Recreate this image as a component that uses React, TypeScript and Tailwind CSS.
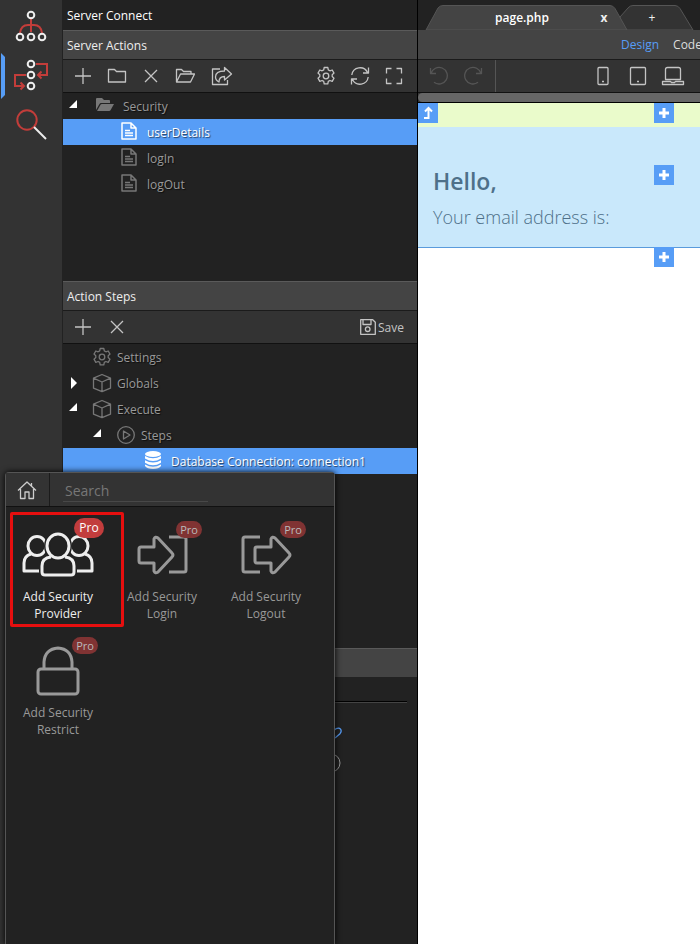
import type { ReactNode } from "react";

type IconProps = { children: ReactNode; w?: number; h?: number; sw?: number; className?: string };

function Icon({ children, w = 20, h = 20, sw = 1.3, className = "" }: IconProps) {
  return (
    <svg
      width={w}
      height={h}
      viewBox={`0 0 ${w} ${h}`}
      fill="none"
      stroke="currentColor"
      strokeWidth={sw}
      strokeLinejoin="round"
      className={`block shrink-0 ${className}`}
      aria-hidden="true"
    >
      {children}
    </svg>
  );
}

const gearPath =
  "M8.2 1.5h3.6l.5 2.4 1.6.9 2.3-.8 1.8 3.1-1.8 1.6v1.9l1.8 1.6-1.8 3.1-2.3-.8-1.6.9-.5 2.4H8.2l-.5-2.4-1.6-.9-2.3.8L2 12.200l1.800-1.600V8.700L2 7.100 3.800 4l2.300.8 1.600-.9z";

const Gear = () => (
  <Icon>
    <path d={gearPath} />
    <circle cx="10" cy="10" r="2.8" />
  </Icon>
);
const Plus = () => (
  <Icon>
    <path d="M10 2v16M2 10h16" />
  </Icon>
);
const Cross = () => (
  <Icon>
    <path d="M4 4l12 12M16 4L4 16" />
  </Icon>
);
const Folder = () => (
  <Icon>
    <path d="M1.500 16V3.500h6l2 2h9V16z" />
  </Icon>
);
const FolderOpen = () => (
  <Icon>
    <path d="M1.500 16V3.500h5l2 2h7.500V8M1.500 16l4-8H19.500l-4 8z" />
  </Icon>
);
const Share = () => (
  <Icon w={22}>
    <path d="M9 3H1.500v15.500h15V14" />
    <path d="M13.500 1.500L20.500 8l-7 6v-3.500c-4 0-5.500 1.500-5.500 5.500-2-1-3.500-3-3.500-5C4.500 7 8.500 5 13.500 5z" />
  </Icon>
);
const Refresh = () => (
  <Icon>
    <path d="M1.800 9A8.300 8.300 0 0 1 17.500 6.500M18.200 11A8.300 8.300 0 0 1 2.500 13.500M18.500 1.500v5.500h-5.500M1.500 18.500V13H7" />
  </Icon>
);
const Expand = () => (
  <Icon>
    <path d="M2.500 7.500v-5h5M12.500 2.500h5v5M17.500 12.500v5h-5M7.500 17.500h-5v-5" />
  </Icon>
);
const Save = () => (
  <Icon w={16} h={16}>
    <path d="M.7.700h12l2.600 2.600v12H.7zM3 .7v4.800h8V.7" />
    <circle cx="7.700" cy="10.200" r="2.300" />
  </Icon>
);
const Cube = () => (
  <Icon>
    <path d="M10 1.500l8.500 3.700v10L10 18.700l-8.500-3.500v-10zM1.500 5.200L10 9l8.500-3.800M10 9v9.700" />
  </Icon>
);
const Play = () => (
  <Icon>
    <circle cx="10" cy="10" r="8.300" />
    <path d="M7.500 6v8l6.500-4z" />
  </Icon>
);
const Doc = () => (
  <Icon w={16} h={18} sw={1.500}>
    <path d="M1 1h9l5 5v11H1zM10 1v5h5M4 8.500h5M4 11h8M4 13.500h8" />
  </Icon>
);
const FolderSolid = () => (
  <Icon w={20} h={16} sw={0}>
    <path d="M1 13V2q0-1 1-1h5l2 2h5q1 0 1 1v2H6q-1 0-1.500 1z" fill="currentColor" />
    <path d="M2 14l3.500-6.300Q6 7 6.800 7H19l-3.500 6.300q-.5.700-1.300.7z" fill="currentColor" />
  </Icon>
);
const Database = () => (
  <Icon w={18} h={20} sw={0}>
    <ellipse cx="9" cy="4" rx="8" ry="3" fill="#fff" />
    <path d="M1 6q8 4.500 16 0v2.500q-8 5-16 0zM1 10.300q8 4.500 16 0v2.500q-8 5-16 0zM1 14.600q8 4.500 16 0v1.500q-2 2.900-8 2.900t-8-2.900z" fill="#fff" />
  </Icon>
);
const Undo = ({ flip = false }: { flip?: boolean }) => (
  <Icon className={flip ? "-scale-x-100" : ""}>
    <path d="M1.500 2v5.500H7M2 7.500a8.300 8.300 0 1 1 3 8.800" />
  </Icon>
);

type Row = {
  label: string;
  icon: ReactNode;
  level?: 0 | 1 | 2;
  arrow?: "open" | "closed";
  selected?: boolean;
  wide?: boolean;
};

const indents = ["pl-1", "pl-7", "pl-13"];

function TreeRow({ label, icon, level = 0, arrow, selected, wide }: Row) {
  return (
    <li>
      <button
        className={`flex h-[26px] w-full items-center text-left [text-shadow:1px_1px_1px_#0009] ${indents[level]} ${
          selected ? "bg-[#579df6] text-white" : "text-[#999]"
        }`}
      >
        <span className="flex w-[25px] shrink-0 pl-[2px] text-white">
          {arrow === "open" && (
            <svg width="8" height="8" className="mb-1" aria-hidden="true">
              <path d="M8 0v8H0z" fill="currentColor" />
            </svg>
          )}
          {arrow === "closed" && (
            <svg width="8" height="12" className="ml-[2px]" aria-hidden="true">
              <path d="M0 0l6 6-6 6z" fill="currentColor" />
            </svg>
          )}
        </span>
        <span className={`flex shrink-0 justify-center ${wide ? "w-[26px] pb-[2px]" : "w-5"} ${selected ? "" : "text-[#777]"}`}>
          {icon}
        </span>
        <span className="ml-[5px] pt-[2px] whitespace-nowrap">{label}</span>
      </button>
    </li>
  );
}

function SectionTitle({ children }: { children?: ReactNode }) {
  return (
    <h2 className="flex h-[29px] shrink-0 items-center border-t border-[#5a5a5a] bg-[#444] px-1 pt-[2px] text-[#eee]">
      {children}
    </h2>
  );
}

function ToolButton({ label, children }: { label: string; children: ReactNode }) {
  return (
    <button aria-label={label} className="flex min-w-[34px] shrink-0 items-center justify-center">
      {children}
    </button>
  );
}

const toolbar = "flex h-[34px] shrink-0 border-t border-b border-t-[#1b1b1b] border-b-[#111] bg-[#333] text-[#c4c4c4]";

type StepProps = { lines: [string, string]; icon: ReactNode; active?: boolean; badge: string };

function StepTile({ lines, icon, active, badge }: StepProps) {
  return (
    <button
      className={`relative flex h-[116px] w-[104px] flex-col items-center pt-[14px] leading-[17px] ${
        active ? "text-[#eee]" : "text-[#999]"
      }`}
    >
      <span className="flex h-[58px] items-center">{icon}</span>
      <span className="mt-1">
        {lines[0]}
        <br />
        {lines[1]}
      </span>
      <span
        className={`absolute rounded-full text-center ${badge} ${
          active
            ? "h-5 w-[30px] bg-[#c23d3d] leading-5 text-white"
            : "h-[17px] w-[26px] bg-[#803333] text-[11px] leading-[17px] text-[#bbb]"
        }`}
      >
        Pro
      </span>
    </button>
  );
}

function InsertButton({ place }: { place: string }) {
  return (
    <button aria-label="Insert" className={`absolute flex size-5 items-center justify-center bg-[#579df6] ${place}`}>
      <svg width="12" height="12" aria-hidden="true">
        <path d="M6 1v10M1 6h10" stroke="#fff" strokeWidth="3" />
      </svg>
    </button>
  );
}

function Rail() {
  return (
    <nav className="flex w-[63px] shrink-0 flex-col items-center border-r border-[#222] bg-[#333]">
      <button aria-label="App structure" className="mt-[9px] flex h-[34px] items-center">
        <Icon w={32} h={34} sw={2}>
          <path d="M16 8v15M5 24q1-8 8-8h6q7 0 8 8" stroke="#c23d3a" />
          <g stroke="#eee">
            <circle cx="16" cy="6" r="3.300" />
            <circle cx="5" cy="28" r="3.300" />
            <circle cx="16" cy="28" r="3.300" />
            <circle cx="27" cy="28" r="3.300" />
          </g>
        </Icon>
      </button>
      <button aria-label="Server Connect" className="relative mt-[10px] flex h-[46px] w-full items-center justify-center">
        <svg width="5" height="46" className="absolute top-0 left-0" aria-hidden="true">
          <path d="M1 0l4 4v38l-4 4z" fill="#579df6" />
        </svg>
        <Icon w={36} h={34} sw={2}>
          <path
            d="M23 5h11v11H25M28.500 12.500L25 16l3.500 3.500M13 16H2v11h9M7.500 23.500L11 27l-3.500 3.500"
            stroke="#c23d3a"
            strokeLinejoin="miter"
          />
          <g stroke="#eee">
            <circle cx="18" cy="5" r="3.300" />
            <circle cx="18" cy="16" r="3.300" />
            <circle cx="18" cy="27" r="3.300" />
          </g>
        </Icon>
      </button>
      <button aria-label="Search project" className="mt-[9px]">
        <Icon w={32} h={32} sw={2}>
          <circle cx="12" cy="12" r="9.700" stroke="#c23d3a" />
          <path d="M19 19l12 12" stroke="#eee" />
        </Icon>
      </button>
    </nav>
  );
}

function ServerPanel() {
  return (
    <section className="flex w-[355px] shrink-0 flex-col border-r border-black">
      <h1 className="flex h-[30px] shrink-0 items-center px-1 pt-[2px] text-white">Server Connect</h1>
      <SectionTitle>Server Actions</SectionTitle>
      <div className={`${toolbar} pr-[6px] pl-[3px]`}>
        <ToolButton label="Add action"><Plus /></ToolButton>
        <ToolButton label="Add folder"><Folder /></ToolButton>
        <ToolButton label="Delete action"><Cross /></ToolButton>
        <ToolButton label="Open folder"><FolderOpen /></ToolButton>
        <span className="w-[3px]" />
        <ToolButton label="Export"><Share /></ToolButton>
        <span className="flex-1" />
        <ToolButton label="Options"><Gear /></ToolButton>
        <ToolButton label="Refresh"><Refresh /></ToolButton>
        <ToolButton label="Expand"><Expand /></ToolButton>
      </div>
      <ul className="h-[188px] shrink-0">
        <TreeRow label="Security" icon={<FolderSolid />} arrow="open" wide />
        <TreeRow label="userDetails" icon={<Doc />} level={1} selected wide />
        <TreeRow label="logIn" icon={<Doc />} level={1} wide />
        <TreeRow label="logOut" icon={<Doc />} level={1} wide />
      </ul>
      <SectionTitle>Action Steps</SectionTitle>
      <div className={`${toolbar} px-[3px]`}>
        <ToolButton label="Add step"><Plus /></ToolButton>
        <ToolButton label="Delete step"><Cross /></ToolButton>
        <span className="flex-1" />
        <button className="flex items-center gap-[2px] pr-[10px]">
          <Save />
          <span className="pt-[2px]">Save</span>
        </button>
      </div>
      <ul className="h-[304px] shrink-0">
        <TreeRow label="Settings" icon={<Gear />} />
        <TreeRow label="Globals" icon={<Cube />} arrow="closed" />
        <TreeRow label="Execute" icon={<Cube />} arrow="open" />
        <TreeRow label="Steps" icon={<Play />} level={1} arrow="open" />
        <TreeRow label="Database Connection: connection1" icon={<Database />} level={2} selected wide />
      </ul>
      <SectionTitle />
      <div className="flex flex-col items-start px-[10px] pt-6">
        <hr className="w-full border-t border-b border-t-black border-b-[#444]" />
        <Icon w={16} h={16} className="mt-6 ml-[254px] text-[#579df6]">
          <path d="M5 5l4-3.300q3-1.500 4.500.5t-.5 4.500L8 11M8 8l-4 3" />
        </Icon>
        <Icon className="mt-[10px] ml-[248px] text-[#999]" sw={1}>
          <circle cx="10" cy="10" r="9" />
        </Icon>
      </div>
    </section>
  );
}

function Preview() {
  return (
    <main className="flex min-w-0 flex-1 flex-col overflow-hidden bg-white">
      <div className="relative flex h-[30px] shrink-0 bg-[#222] pt-[6px] text-[#eee]">
        <svg width="282" height="30" className="absolute top-0 left-0" aria-hidden="true">
          <path d="M202 30V17l8-9q2-2.500 5-2.500h42q3 0 5 3L275 30z" fill="#333" stroke="#555" />
          <path d="M8 30L20 8q2-2.500 5-2.500h167q3 0 5 3L209 30z" fill="#444" stroke="#555" />
        </svg>
        <button className="relative ml-[65px] w-[78px] font-semibold text-white">page.php</button>
        <button aria-label="Close tab" className="relative ml-8 w-[22px] font-bold">x</button>
        <button aria-label="New tab" className="relative ml-[25px] w-6">+</button>
      </div>
      <div className="-mt-px flex h-[30px] shrink-0 items-center gap-[14px] overflow-hidden border-t border-[#555] bg-[#444] pl-[203px] text-[#ddd]">
        <button className="shrink-0 text-[#579df6]">Design</button>
        <button className="shrink-0">Code</button>
      </div>
      <div className={`${toolbar} overflow-hidden`}>
        <div className="flex w-[78px] shrink-0 border-r border-[#555] pl-1 text-[#555]">
          <ToolButton label="Undo"><Undo /></ToolButton>
          <ToolButton label="Redo"><Undo flip /></ToolButton>
        </div>
        <div className="flex shrink-0 gap-[1px] pl-[90px]">
          <ToolButton label="Phone">
            <Icon>
              <rect x="5" y="1.500" width="10" height="17" rx="1" />
              <path d="M9 15.500h2" />
            </Icon>
          </ToolButton>
          <ToolButton label="Tablet">
            <Icon>
              <rect x="2.500" y="1.500" width="15" height="17" rx="1" />
              <path d="M9 15.500h2" />
            </Icon>
          </ToolButton>
          <ToolButton label="Laptop">
            <Icon w={24}>
              <path d="M4.500 13.500v-10q0-2 2-2h11q2 0 2 2v10zM1.500 15.500v3h21v-3h-8l-1 1h-3l-1-1z" />
            </Icon>
          </ToolButton>
        </div>
      </div>
      <div className="h-[10px] shrink-0 border-b border-black bg-[#333]">
        <div className="h-[9px] rounded-l-full bg-[#666]" />
      </div>
      <div className="relative text-[#4e7089]">
        <div className="h-6 bg-[#eafbcb]" />
        <div className="flex h-[121px] flex-col border-b border-[#5a9bdc] bg-[#c9e8fb] pt-[38px] pl-[15px]">
          <h2 className="text-[23px] leading-8 font-semibold">Hello,</h2>
          <p className="mt-1 text-[18px] leading-8 font-light">Your email address is:</p>
        </div>
        <button aria-label="Select parent" className="absolute top-0 left-0 flex size-5 items-center justify-center bg-[#579df6]">
          <svg width="12" height="14" fill="none" stroke="#fff" strokeWidth="2" aria-hidden="true">
            <path d="M2 12h4.500V3M3 5.500L6.500 2 10 5.500" />
          </svg>
        </button>
        <InsertButton place="top-0 right-[26px]" />
        <InsertButton place="top-[62px] right-[26px]" />
        <InsertButton place="top-36 right-[26px]" />
      </div>
    </main>
  );
}

const centreBody = "M30 25q-9 1-9 9v6q0 3 3 3h26q3 0 3-3v-6q0-8-9-9";

function StepPicker() {
  return (
    <div
      role="dialog"
      aria-label="Add step"
      className="absolute top-[472px] bottom-0 left-[5px] w-[330px] rounded-t-sm border border-b-0 border-[#555] bg-[#222] shadow-[0_0_6px_#000]"
    >
      <div className="flex h-[34px] border-b border-[#111] bg-[#333]">
        <button aria-label="Home" className="flex w-[44px] items-center justify-center border-r border-[#1b1b1b] pr-[2px] text-[#ccc]">
          <Icon>
            <path d="M1 10.500L10 2l9 8.500M3.500 9v9.500H8V12h4v6.500h4.500V9M14.500 3v3" />
          </Icon>
        </button>
        <input
          aria-label="Search"
          placeholder="Search"
          className="mt-[5px] ml-[13px] h-6 w-[145px] border-b border-[#484848] bg-transparent pt-[2px] pl-[2px] text-[14px] outline-none placeholder:text-[#777]"
        />
      </div>
      <div className="flex flex-wrap pt-[5px]">
        <StepTile
          active
          lines={["Add Security", "Provider"]}
          badge="top-[6px] left-[68px]"
          icon={
            <Icon w={74} h={46} sw={3}>
              <ellipse cx="16" cy="14" rx="9" ry="9.500" />
              <ellipse cx="58" cy="14" rx="9" ry="9.500" />
              <path d="M10 22q-7 2-7 9v8h16M64 22q7 2 7 9v8H55" />
              <g fill="#222" stroke="#222" strokeWidth="6">
                <path d={centreBody} />
                <ellipse cx="37" cy="14" rx="11" ry="12" />
              </g>
              <path d={centreBody} />
              <ellipse cx="37" cy="14" rx="11" ry="12" />
            </Icon>
          }
        />
        <StepTile
          lines={["Add Security", "Login"]}
          badge="top-[9px] left-[66px]"
          icon={
            <Icon w={52} h={42} sw={3}>
              <path d="M5 13h13V5q1-3 4-1l14 15q2 2 0 4L22 38q-3 2-4-1v-8H5q-2 0-2-2V15q0-2 2-2zM33 3h15q2 0 2 2v31q0 2-2 2H33" />
            </Icon>
          }
        />
        <StepTile
          lines={["Add Security", "Logout"]}
          badge="top-[9px] left-[66px]"
          icon={
            <Icon w={52} h={42} sw={3}>
              <path d="M17 13h14V5q1-3 4-1l14 15q2 2 0 4L35 38q-3 2-4-1v-8H17q-2 0-2-2V15q0-2 2-2zM20 3H5Q3 3 3 5v31q0 2 2 2h15" />
            </Icon>
          }
        />
        <StepTile
          lines={["Add Security", "Restrict"]}
          badge="top-[9px] left-[66px]"
          icon={
            <Icon w={44} h={50} sw={3}>
              <rect x="2" y="23" width="40" height="25" rx="3" />
              <path d="M8 23v-7q1-13 14-14 13 1 14 14v7" />
            </Icon>
          }
        />
      </div>
      <div className="pointer-events-none absolute top-[39px] left-1 h-[115px] w-[114px] rounded-xs border-3 border-[#e60f0f]" />
    </div>
  );
}

export default function App() {
  return (
    <div className="relative flex h-screen w-full overflow-hidden bg-[#222] font-['Open_Sans','Noto_Sans',sans-serif] text-[12px]">
      <Rail />
      <ServerPanel />
      <Preview />
      <StepPicker />
    </div>
  );
}
